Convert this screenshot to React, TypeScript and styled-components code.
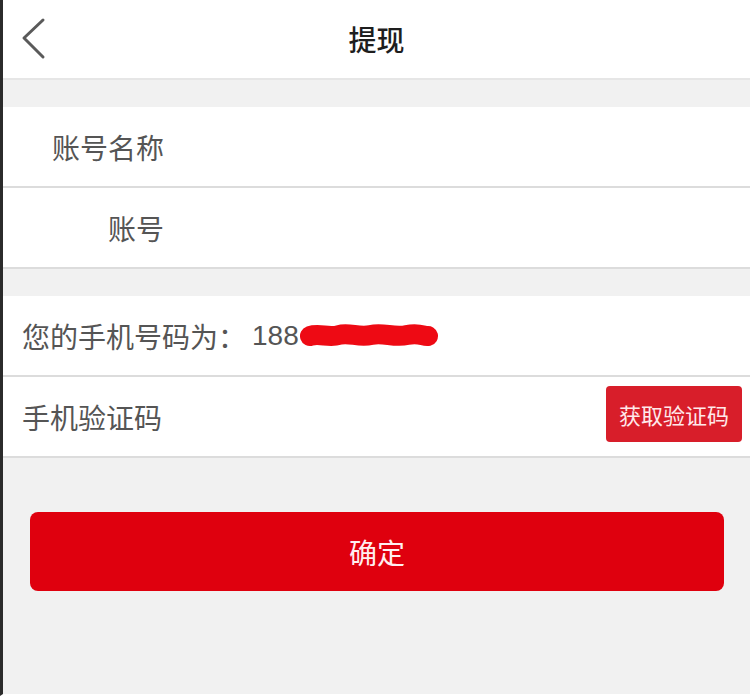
import React from 'react'
import styled, { createGlobalStyle } from 'styled-components'

const GlobalStyle = createGlobalStyle`
  html, body {
    margin: 0;
    padding: 0;
    background: #f1f1f1;
  }
  * {
    box-sizing: border-box;
  }
`

function BackIcon() {
  return (
    <svg width="30" height="44" viewBox="0 0 30 44">
      <polyline
        points="24,3 5,21 24,40"
        fill="none"
        stroke="#5a5a5a"
        strokeWidth="3"
        strokeLinecap="round"
        strokeLinejoin="round"
      />
    </svg>
  )
}

// red marker scribble covering the rest of the number
function Redacted() {
  return (
    <svg width="140" height="28" viewBox="0 0 140 28">
      <path
        d="M11 14 C 20 11, 30 16, 40 13 S 60 16, 72 13 S 95 16, 108 13 S 125 15, 129 14"
        fill="none"
        stroke="#ee0a14"
        strokeWidth="20"
        strokeLinecap="round"
        strokeLinejoin="round"
      />
    </svg>
  )
}

type FieldProps = { label: string }

function LabelRow({ label }: FieldProps) {
  return (
    <Row>
      <AccountLabel>{label}</AccountLabel>
    </Row>
  )
}

function App() {
  return (
    <>
      <GlobalStyle />
      <Page>
        {/* Header */}
        <Header>
          <BackButton>
            <BackIcon />
          </BackButton>
          <Title>提现</Title>
        </Header>

        {/* Account */}
        <Section>
          <LabelRow label="账号名称" />
          <LabelRow label="账号" />
        </Section>

        {/* Phone */}
        <Section>
          <Row>
            <RowText>您的手机号码为：</RowText>
            <Phone>188</Phone>
            <Redacted />
          </Row>
          <Row>
            <RowText>手机验证码</RowText>
            <CodeButton>获取验证码</CodeButton>
          </Row>
        </Section>

        <Footer>
          <SubmitButton>确定</SubmitButton>
        </Footer>
      </Page>
    </>
  )
}

const Page = styled.div`
  height: 696px;
  width: 750px;
  background: #f1f1f1;
  border-left: 3px solid #2b2b2b;
  border-bottom: 2px solid #ffffff;
  font-family: "Noto Sans CJK SC", "Noto Sans", sans-serif;
  display: flex;
  flex-direction: column;
`
const Header = styled.div`
  height: 80px;
  background: #ffffff;
  display: flex;
  align-items: center;
  justify-content: center;
  position: relative;
  border-bottom: 2px solid #e6e6e6;
`
const BackButton = styled.div`
  position: absolute;
  left: 16px;
  top: 17px;
  display: flex;
`
const Title = styled.div`
  font-size: 28px;
  font-weight: 500;
  color: #1e1e1e;
`
const Section = styled.div`
  margin-top: 27px;
  background: #ffffff;
  display: flex;
  flex-direction: column;
`
const Row = styled.div`
  height: 81px;
  display: flex;
  align-items: center;
  padding: 0 8px 0 19px;
  border-bottom: 2px solid #dcdcdc;
`
const AccountLabel = styled.div`
  width: 142px;
  text-align: right;
  font-size: 28px;
  color: #555555;
`
const RowText = styled.div`
  font-size: 28px;
  color: #555555;
`
const Phone = styled.span`
  font-family: "Liberation Sans", "Noto Sans", sans-serif;
  font-size: 28px;
  color: #555555;
  margin-left: 6px;
`
const CodeButton = styled.button`
  margin-left: auto;
  margin-bottom: 6px;
  width: 136px;
  height: 56px;
  border: none;
  border-radius: 4px;
  background: #d81e2a;
  color: #ffe9ea;
  font-family: "Noto Sans CJK SC", sans-serif;
  font-size: 22px;
  padding: 0;
`
const Footer = styled.div`
  padding: 54px 26px 0 27px;
`
const SubmitButton = styled.button`
  width: 100%;
  height: 79px;
  border: none;
  border-radius: 8px;
  background: #df000e;
  color: #ffeef0;
  font-family: "Noto Sans CJK SC", sans-serif;
  font-size: 28px;
  padding: 0;
`

export default App
